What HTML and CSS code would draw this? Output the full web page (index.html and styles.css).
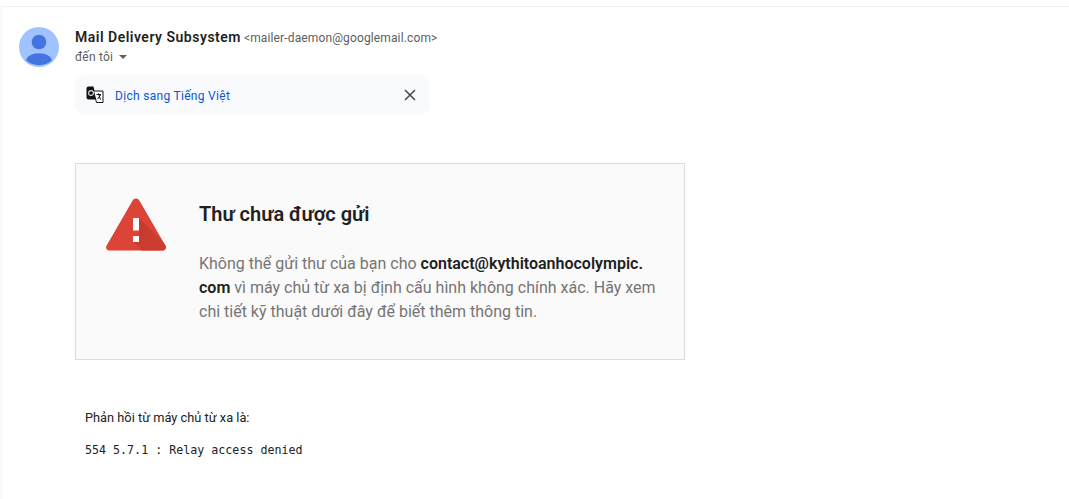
FILE: index.html
```html
<!DOCTYPE html>
<html lang="vi">
<head>
<meta charset="utf-8">
<title>Mail</title>
<link rel="stylesheet" href="styles.css">
</head>
<body>
<main class="pane">
  <header class="head">
    <svg class="avatar" viewBox="0 0 40 40" width="40" height="40" aria-hidden="true">
      <circle cx="20" cy="20" r="20" fill="#a0c3ff"/>
      <circle cx="20" cy="15" r="7.300" fill="#4374e0"/>
      <path d="M7.200 33.500c0-3.900 5.500-7.200 12.800-7.200s12.800 3.300 12.800 7.200a20 20 0 0 1-25.600 0z" fill="#4374e0"/>
    </svg>
    <div class="meta">
      <div class="from"><span class="name">Mail Delivery Subsystem</span> <span class="addr">&lt;mailer-daemon@googlemail.com&gt;</span></div>
      <div class="to">đến tôi <span class="caret"></span></div>
      <div class="translate">
        <svg class="tr-icon" viewBox="0 0 18 18" width="18" height="18" aria-hidden="true">
          <path d="M0.500 2.500a2 2 0 0 1 2-2h5l3 13h-8a2 2 0 0 1-2-2z" fill="#111"/>
          <path d="M7.500 5h9.500v11.500h-6.500z" fill="#fff" stroke="#111" stroke-width="1"/>
          <circle cx="5" cy="7" r="2.400" fill="none" stroke="#ddd" stroke-width="1.100"/>
          <path d="M10.500 8.500h4.500M12.500 7.500l2 6M14.500 9l-3 4" fill="none" stroke="#111" stroke-width="1"/>
        </svg>
        <a class="tr-link" href="#">Dịch sang Tiếng Việt</a>
        <svg class="tr-close" viewBox="0 0 12 12" width="12" height="12" aria-hidden="true">
          <path d="M1 1l10 10M11 1L1 11" stroke="#444746" stroke-width="1.500" fill="none"/>
        </svg>
      </div>
    </div>
  </header>
  <section class="card">
    <svg class="warn" viewBox="0 0 60 54" width="60" height="54" aria-hidden="true">
      <defs>
        <linearGradient id="shade" x1="0" y1="0" x2="1" y2="1">
          <stop offset="0" stop-color="#c53929"/>
          <stop offset="1" stop-color="#cf3f31"/>
        </linearGradient>
      </defs>
      <path d="M30 1.500c1.600 0 2.700.8 3.500 2.200l26 45c1.200 2.200-.2 4.800-2.800 4.800H3.300c-2.600 0-4-2.600-2.800-4.800l26-45c.8-1.400 1.900-2.200 3.500-2.200z" fill="#db4437"/>
      <path d="M33 21l24.500 24.500 2 3.200c1.200 2.200-.2 4.800-2.800 4.800H36L27.500 45H33z" fill="url(#shade)"/>
      <rect x="27" y="21" width="6" height="12.500" fill="#fff"/>
      <rect x="27" y="39" width="6" height="6" fill="#fff"/>
    </svg>
    <div class="msg">
      <h1 class="title">Thư chưa được gửi</h1>
      <p class="body">Không thể gửi thư của bạn cho <b class="strong">contact@kythitoanhocolympic.<br>com</b> vì máy chủ từ xa bị định cấu hình không chính xác. Hãy xem chi tiết kỹ thuật dưới đây để biết thêm thông tin.</p>
    </div>
  </section>
  <section class="reply">
    <p class="reply-label">Phản hồi từ máy chủ từ xa là:</p>
    <p class="reply-code">554 5.7.1 : Relay access denied</p>
  </section>
</main>
</body>
</html>
```
FILE: styles.css
```css
html, body { margin: 0; padding: 0; height: 100%; background: #fff; overflow: hidden; }
body { padding: 6px 0 0 3px; box-sizing: border-box; background: linear-gradient(#fff, #fff) 0 0 / 100% 6px no-repeat, #f8fafd; font-family: Roboto, "Noto Sans", sans-serif; }
.pane { background: #fff; border-top: 1px solid #eceef1; height: 100%; box-sizing: border-box; padding: 20px 0 0 16px; }
.head { display: flex; gap: 16px; align-items: flex-start; }
.avatar { flex: none; }
.meta { display: flex; flex-direction: column; }
.from { line-height: 20px; font-size: 12px; color: #5e5e5e; white-space: nowrap; }
.name { font-size: 14px; font-weight: 600; color: #1f1f1f; letter-spacing: .5px; }
.addr { letter-spacing: .13px; }
.to { display: flex; align-items: center; gap: 6px; font-size: 12px; line-height: 20px; color: #5e5e5e; margin-top: -1px; letter-spacing: .2px; }
.caret { width: 0; height: 0; border: 4px solid transparent; border-top: 4px solid #5e5e5e; border-bottom: 0; }
.translate { display: flex; align-items: center; width: 355px; height: 40px; box-sizing: border-box; margin-top: 8px; padding: 0 14px 0 11px; background: #f8fafd; border-radius: 10px; }
.tr-icon { flex: none; }
.tr-link { margin: 2px 0 0 11px; font-size: 12px; color: #0b57d0; text-decoration: none; flex: 1; letter-spacing: .3px; }
.tr-close { flex: none; }
.card { display: flex; width: 610px; height: 197px; box-sizing: border-box; margin: 48px 0 0 56px; background: #fafafa; border: 1px solid #dcdcdc; padding: 33px 0 0 30px; gap: 33px; }
.warn { flex: none; }
.msg { width: 462px; padding-top: 5px; }
.title { margin: 0; font-size: 20px; line-height: 24px; font-weight: 600; color: #212121; }
.body { margin: 26px 0 0; font-size: 16px; line-height: 24px; color: #757575; }
.strong { font-weight: 600; color: #212121; }
.reply { padding: 50px 0 0 66px; }
.reply-label { margin: 0; font-size: 12.800px; line-height: 16px; color: #222; }
.reply-code { margin: 16px 0 0; font-family: "DejaVu Sans Mono", monospace; font-size: 11.670px; line-height: 16px; color: #222; }
```
